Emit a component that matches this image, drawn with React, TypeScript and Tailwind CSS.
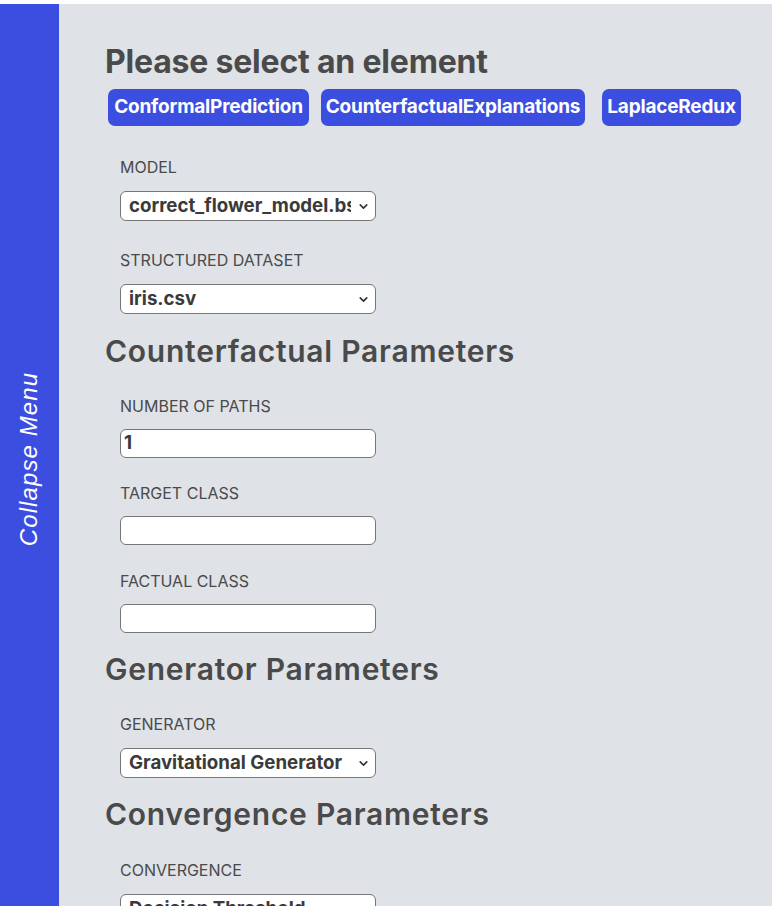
import { ChevronDown } from "lucide-react";

const Field = ({ label, children, gap, lg = "mb-[12px]" }: { label: string; children: React.ReactNode; gap: string; lg?: string }) => (
  <div className={`pl-[15px] ${gap}`}>
    <p className={`text-[16px] leading-[24px] uppercase text-[#4a4a4a] ${lg}`}>{label}</p>
    {children}
  </div>
);

const Select = ({ value }: { value: string }) => (
  <div className="relative w-[256px] h-[30px] bg-white border border-[#767676] rounded-[6px] flex items-center overflow-hidden">
    <span className="pl-[8px] w-[230px] text-[18.7px] font-bold text-[#3a3a3a] whitespace-nowrap overflow-hidden">{value}</span>
    <ChevronDown className="absolute right-[5px] top-[8px] w-[13px] h-[13px] text-[#333]" strokeWidth={3} />
  </div>
);

const Input = ({ value = "" }: { value?: string }) => (
  <div className="w-[256px] h-[29px] bg-white border border-[#767676] rounded-[6px] flex items-center">
    <span className="pl-[3px] text-[18.7px] font-bold text-[#3a3a3a]">{value}</span>
  </div>
);

const Heading = ({ children, gap }: { children: React.ReactNode; gap: string }) => (
  <h2 className={`text-[30px] leading-[40px] font-semibold tracking-[0.75px] ${gap}`}>{children}</h2>
);

const btn = "h-[37px] rounded-[7px] bg-[#3c4edf] text-white text-[19px] font-bold tracking-[-0.2px] whitespace-nowrap flex items-center justify-center";

const App = () => {
  return (
    <div className="min-h-screen bg-white pt-[4px] flex" style={{ fontFamily: "Inter, 'Noto Sans', sans-serif" }}>
      <div className="w-[59px] shrink-0 bg-[#3c4edf] pt-[7px] flex items-center justify-center">
        <span
          className="text-white text-[24px] tracking-[1.1px] italic whitespace-nowrap -rotate-90"
          style={{ fontFamily: "'Liberation Sans', Arial, sans-serif" }}
        >
          Collapse Menu
        </span>
      </div>
      <main className="flex-1 bg-[#dfe2e7] pl-[46px] pt-[38px] h-[902px] overflow-hidden text-[#4a4a4a]">
        <h1 className="text-[32px] leading-[40px] font-bold tracking-[-0.2px]">Please select an element</h1>
        <div className="flex items-center mt-[7px] ml-[3px] mb-[29px]">
          <button className={`${btn} w-[201px] mr-[12px]`}>ConformalPrediction</button>
          <button className={`${btn} w-[264px] mr-[17px]`}>CounterfactualExplanations</button>
          <button className={`${btn} w-[139px]`}>LaplaceRedux</button>
        </div>
        <Field label="Model" gap="mb-[27px]">
          <Select value="correct_flower_model.bson" />
        </Field>
        <Field label="Structured Dataset" gap="mb-[17px]">
          <Select value="iris.csv" />
        </Field>

        <Heading gap="mb-[23px]">Counterfactual Parameters</Heading>
        <Field label="Number of Paths" gap="mb-[23px]" lg="mb-[11px]">
          <Input value="1" />
        </Field>
        <Field label="Target Class" gap="mb-[24px]" lg="mb-[11px]">
          <Input />
        </Field>
        <Field label="Factual Class" gap="mb-[16px]" lg="mb-[11px]">
          <Input />
        </Field>

        <Heading gap="mb-[23px]">Generator Parameters</Heading>
        <Field label="Generator" gap="mb-[16px]">
          <Select value="Gravitational Generator" />
        </Field>

        <Heading gap="mb-[24px]">Convergence Parameters</Heading>
        <Field label="Convergence" gap="mb-0">
          <Select value="Decision Threshold" />
        </Field>
      </main>
    </div>
  );
};

export default App;
